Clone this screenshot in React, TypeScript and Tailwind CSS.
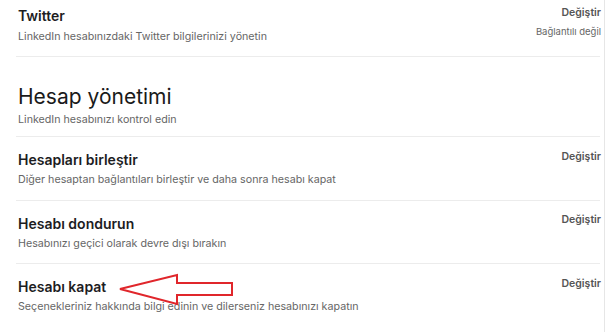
import React from 'react'

const rows = [
  { title: 'Hesapları birleştir', desc: 'Diğer hesaptan bağlantıları birleştir ve daha sonra hesabı kapat' },
  { title: 'Hesabı dondurun', desc: 'Hesabınızı geçici olarak devre dışı bırakın' },
  { title: 'Hesabı kapat', desc: 'Seçenekleriniz hakkında bilgi edinin ve dilerseniz hesabınızı kapatın', last: true },
]

function Row({ title, desc, last }: { title: string; desc: string; last?: boolean }) {
  return (
    <div className={`flex items-start justify-between ${last ? '' : 'border-b border-[#ececec]'}`}>
      <div className="pl-[2px] pt-[14px] pb-[11.5px]">
        <p className="text-[14px] leading-[18px] font-semibold text-[#1d1d1f]">{title}</p>
        <p className="mt-[3px] text-[10.7px] leading-[16px] text-[#666]">{desc}</p>
      </div>
      <span className="pt-[12.5px] -mr-[1px] text-[10.5px] leading-[14px] font-semibold text-[#555]">Değiştir</span>
    </div>
  )
}

export default function App() {
  return (
    <div className="relative w-[608px] h-[332px] overflow-hidden bg-white font-['Inter',sans-serif]">
      <div className="h-full w-[605px] border-r border-[#e6e6e6] pl-[16px] pr-[4px]">

        {/* Twitter */}
        <div className="flex items-start justify-between border-b border-[#ececec]">
          <div className="pl-[2px] pt-[7px] pb-[11px]">
            <p className="text-[14px] leading-[18px] font-semibold text-[#1d1d1f]">Twitter</p>
            <p className="mt-[4px] text-[10.7px] leading-[16px] text-[#666]">LinkedIn hesabınızdaki Twitter bilgilerinizi yönetin</p>
          </div>
          <div className="flex flex-col items-end pt-[6px] -mr-[1px]">
            <span className="text-[10.5px] leading-[14px] font-semibold text-[#555]">Değiştir</span>
            <span className="mt-[5px] text-[9.5px] leading-[13px] text-[#666]">Bağlantılı değil</span>
          </div>
        </div>

        {/* Section header */}
        <div className="border-b border-[#ececec] pl-[2px] pt-[26px] pb-[8px]">
          <h2 className="text-[21px] leading-[28px] font-normal text-[#1a1a1a]">Hesap yönetimi</h2>
          <p className="mt-[1px] text-[10.7px] leading-[16px] text-[#666]">LinkedIn hesabınızı kontrol edin</p>
        </div>

        {rows.map(r => <Row key={r.title} {...r} />)}
      </div>

      {/* red annotation arrow */}
      <svg className="absolute left-0 top-0 pointer-events-none" width="608" height="332">
        <polygon
          points="120,289 177,275 177,283 232,283 232,295 177,295 177,304"
          fill="none" stroke="#e0262b" strokeWidth="2" strokeLinejoin="miter" />
      </svg>
    </div>
  )
}
